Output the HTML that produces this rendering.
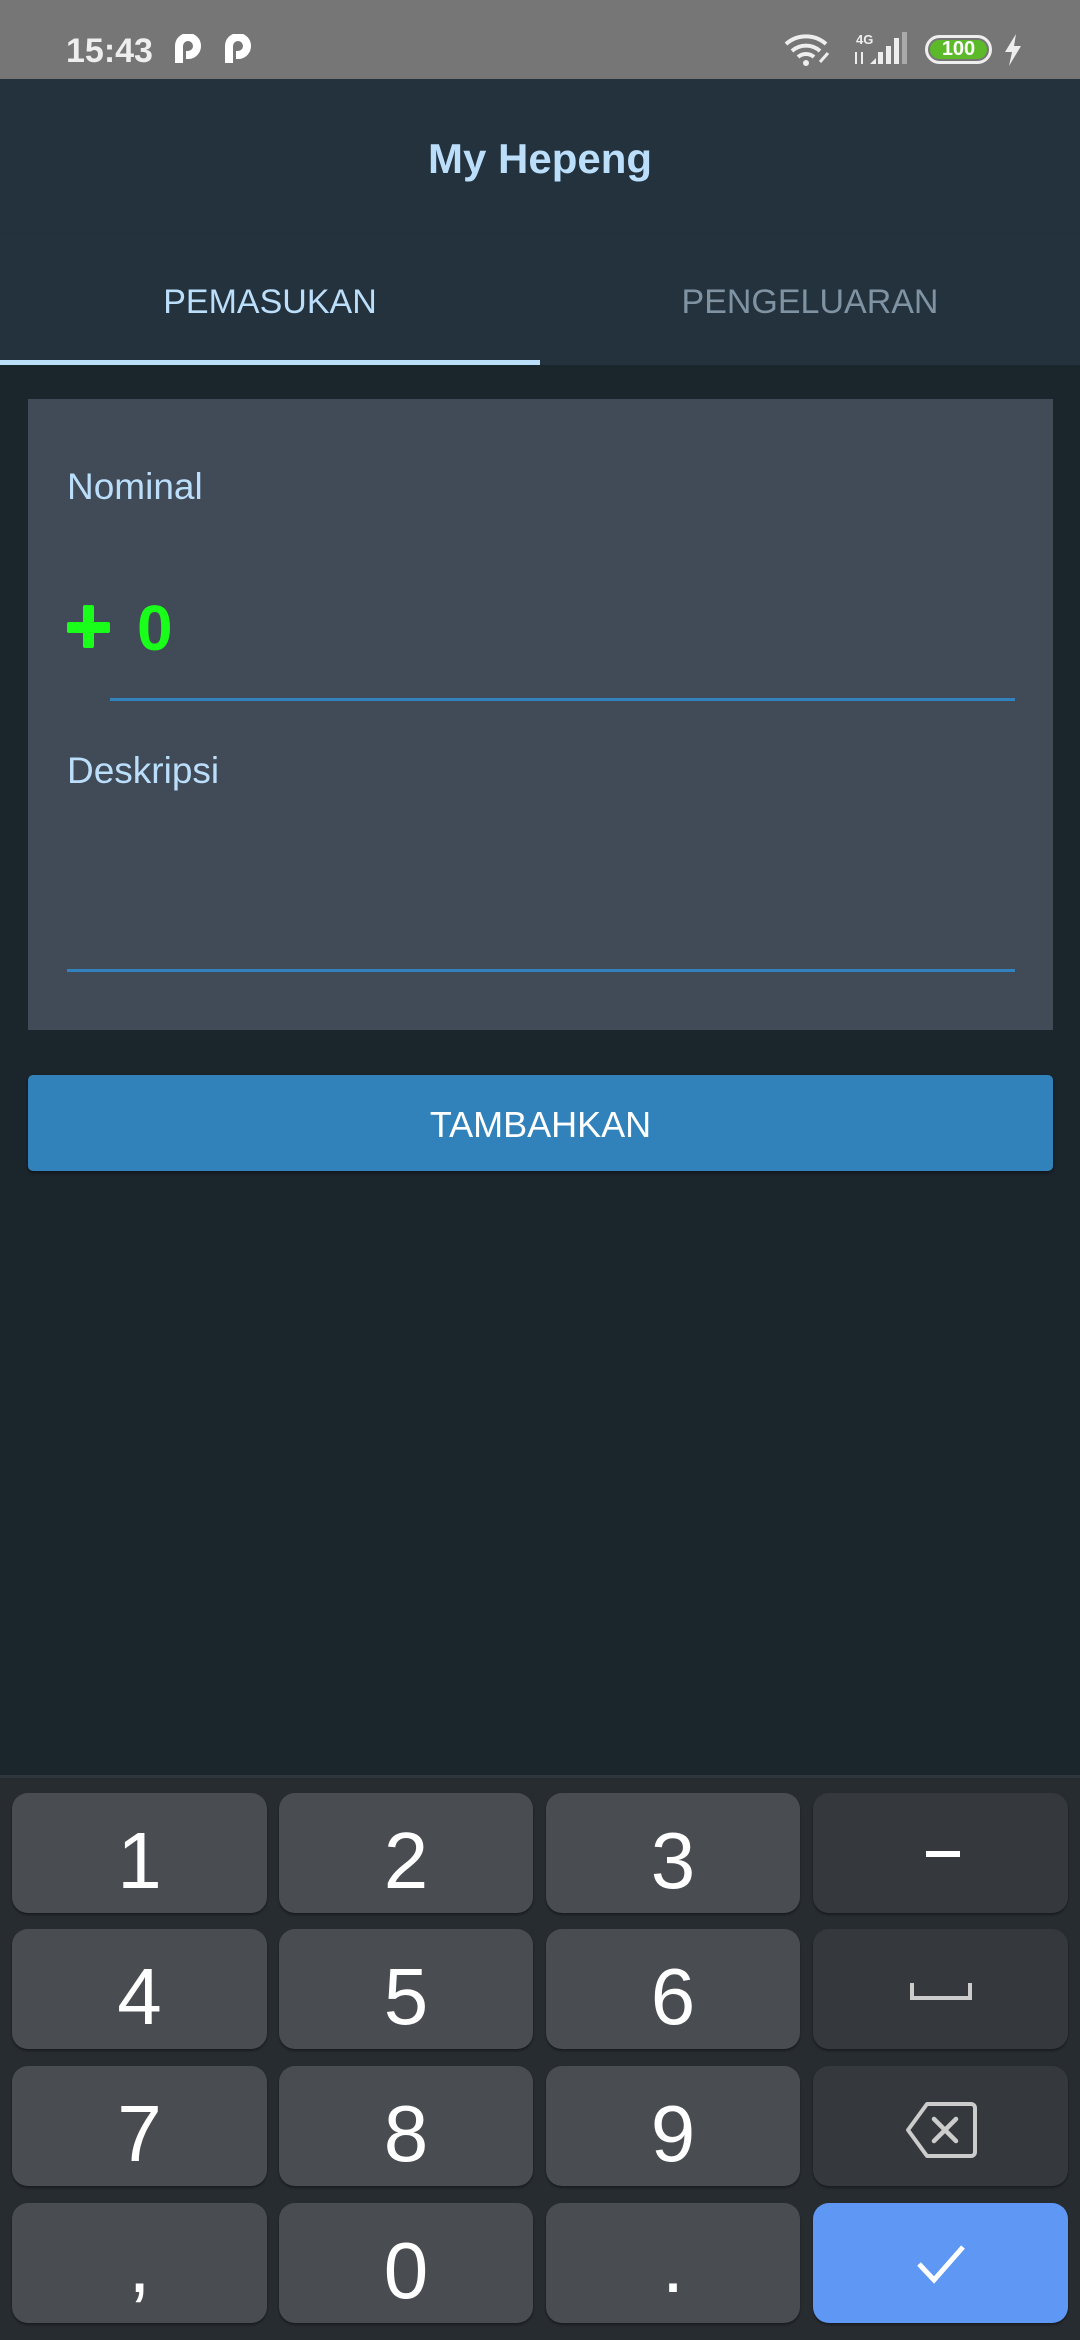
<!DOCTYPE html>
<html><head><meta charset="utf-8"><style>
*{margin:0;padding:0;box-sizing:border-box}
body{width:1080px;height:2340px;background:#1b252c;position:relative;overflow:hidden;font-family:"Liberation Sans",Roboto,sans-serif}
.a{position:absolute}
.t{position:absolute;white-space:nowrap;line-height:1}
.key{position:absolute;background:#494d51;border-radius:16px;color:#fff;font-size:80px;text-align:center;box-shadow:0 2px 2px rgba(0,0,0,.35)}
.key span{position:absolute;left:0;right:0;top:28px;line-height:1}
.fn{background:#35393e}
</style></head><body>
<div class="a" style="left:0;top:0;width:1080px;height:79px;background:#767676"></div>
<div class="t" style="left:66px;top:34px;font-size:34px;font-weight:bold;color:#eee">15:43</div>
<svg class="a" style="left:174px;top:34px" width="80" height="31" viewBox="0 0 80 31"><path d="M5 29V12a9 9 0 0 1 18 0a9 9 0 0 1-9 9h-2" fill="none" stroke="#fff" stroke-width="8"/><path d="M55 29V12a9 9 0 0 1 18 0a9 9 0 0 1-9 9h-2" fill="none" stroke="#fff" stroke-width="8"/></svg>
<svg class="a" style="left:784px;top:34px" width="50" height="32" viewBox="0 0 50 32"><path d="M2 10a30 30 0 0 1 40 0M8 17a21 21 0 0 1 28 0M14 23a12 12 0 0 1 16 0" fill="none" stroke="#eee" stroke-width="4"/><circle cx="22" cy="29" r="3" fill="#eee"/><path d="M36 28l8-9" stroke="#eee" stroke-width="3"/></svg>
<div class="t" style="left:856px;top:33px;font-size:13px;font-weight:bold;color:#eee">4G</div>
<svg class="a" style="left:852px;top:30px" width="60" height="36" viewBox="0 0 60 36"><path d="M4 34V22M10 34V22" stroke="#eee" stroke-width="2"/><path d="M18 34l6-6v6z" fill="#eee"/><rect x="26" y="22" width="5" height="12" fill="#eee"/><rect x="34" y="16" width="5" height="18" fill="#eee"/><rect x="42" y="8" width="5" height="26" fill="#eee"/><rect x="50" y="2" width="5" height="32" fill="#aaa"/></svg>
<div class="a" style="left:925px;top:35px;width:67px;height:29px;border:3px solid #eee;border-radius:15px;padding:2px"><div style="width:100%;height:100%;background:#5cba2a;border-radius:10px;color:#fff;font-size:20px;font-weight:bold;text-align:center;line-height:19px">100</div></div>
<svg class="a" style="left:1002px;top:34px" width="22" height="32" viewBox="0 0 22 32"><path d="M14 0L3 18h7l-3 14L19 12h-7z" fill="#eee"/></svg>

<div class="a" style="left:0;top:79px;width:1080px;height:154px;background:#24323d"></div>
<div class="t" style="left:0;width:1080px;text-align:center;top:138px;font-size:42px;font-weight:bold;color:#bbdefb">My Hepeng</div>
<div class="a" style="left:0;top:233px;width:1080px;height:132px;background:#24323d;border-top:1px solid #22303a"></div>
<div class="t" style="left:0;width:540px;text-align:center;top:285px;font-size:34px;color:#bbdefb">PEMASUKAN</div>
<div class="t" style="left:540px;width:540px;text-align:center;top:285px;font-size:34px;color:#7f93a2">PENGELUARAN</div>
<div class="a" style="left:0;top:360px;width:540px;height:5px;background:#bbdefb"></div>

<div class="a" style="left:28px;top:399px;width:1025px;height:631px;background:#414b57"></div>
<div class="t" style="left:67px;top:468px;font-size:37px;color:#bbdefb">Nominal</div>
<div class="a" style="left:67px;top:622px;width:43px;height:11px;background:#1aff1a;border-radius:2px"></div>
<div class="a" style="left:83px;top:605px;width:11px;height:43px;background:#1aff1a;border-radius:2px"></div>
<div class="t" style="left:137px;top:596px;font-size:64px;font-weight:bold;color:#1aff1a">0</div>
<div class="a" style="left:110px;top:698px;width:905px;height:3px;background:#3182bd"></div>
<div class="t" style="left:67px;top:752px;font-size:37px;color:#bbdefb">Deskripsi</div>
<div class="a" style="left:67px;top:969px;width:948px;height:3px;background:#3182bd"></div>

<div class="a" style="left:28px;top:1075px;width:1025px;height:96px;background:#3182bb;border-radius:5px;box-shadow:0 2px 3px rgba(0,0,0,.4)"></div>
<div class="t" style="left:28px;width:1025px;text-align:center;top:1107px;font-size:36px;color:#fff">TAMBAHKAN</div>

<div class="a" style="left:0;top:1775px;width:1080px;height:565px;background:#272c31;border-top:3px solid #2f363c"></div>
<div class="key" style="left:12px;top:1793px;width:255px;height:120px"><span>1</span></div>
<div class="key" style="left:279px;top:1793px;width:254px;height:120px"><span>2</span></div>
<div class="key" style="left:546px;top:1793px;width:254px;height:120px"><span>3</span></div>
<div class="key fn" style="left:813px;top:1793px;width:255px;height:120px"><div class="a" style="left:113px;top:58px;width:34px;height:6px;background:#fff"></div></div>
<div class="key" style="left:12px;top:1929px;width:255px;height:120px"><span>4</span></div>
<div class="key" style="left:279px;top:1929px;width:254px;height:120px"><span>5</span></div>
<div class="key" style="left:546px;top:1929px;width:254px;height:120px"><span>6</span></div>
<div class="key fn" style="left:813px;top:1929px;width:255px;height:120px"><svg class="a" style="left:97px;top:54px" width="62" height="18" viewBox="0 0 62 18"><path d="M2 0v15h58V0" fill="none" stroke="#ccc" stroke-width="4"/></svg></div>
<div class="key" style="left:12px;top:2066px;width:255px;height:120px"><span>7</span></div>
<div class="key" style="left:279px;top:2066px;width:254px;height:120px"><span>8</span></div>
<div class="key" style="left:546px;top:2066px;width:254px;height:120px"><span>9</span></div>
<div class="key fn" style="left:813px;top:2066px;width:255px;height:120px"><svg class="a" style="left:92px;top:36px" width="72" height="56" viewBox="0 0 72 56"><path d="M22 2h44a4 4 0 0 1 4 4v44a4 4 0 0 1-4 4H22L3 28z" fill="none" stroke="#ccc" stroke-width="4" stroke-linejoin="round"/><path d="M29 17l22 22M51 17L29 39" stroke="#ccc" stroke-width="4.5" stroke-linecap="round"/></svg></div>
<div class="key" style="left:12px;top:2203px;width:255px;height:120px"><span style="top:22px">,</span></div>
<div class="key" style="left:279px;top:2203px;width:254px;height:120px"><span>0</span></div>
<div class="key" style="left:546px;top:2203px;width:254px;height:120px"><span style="top:22px">.</span></div>
<div class="key" style="left:813px;top:2203px;width:255px;height:120px;background:#5f97f5"><svg class="a" style="left:102px;top:40px" width="52" height="42" viewBox="0 0 52 42"><path d="M4 21l15 16L48 4" fill="none" stroke="#fff" stroke-width="5"/></svg></div>
</body></html>
